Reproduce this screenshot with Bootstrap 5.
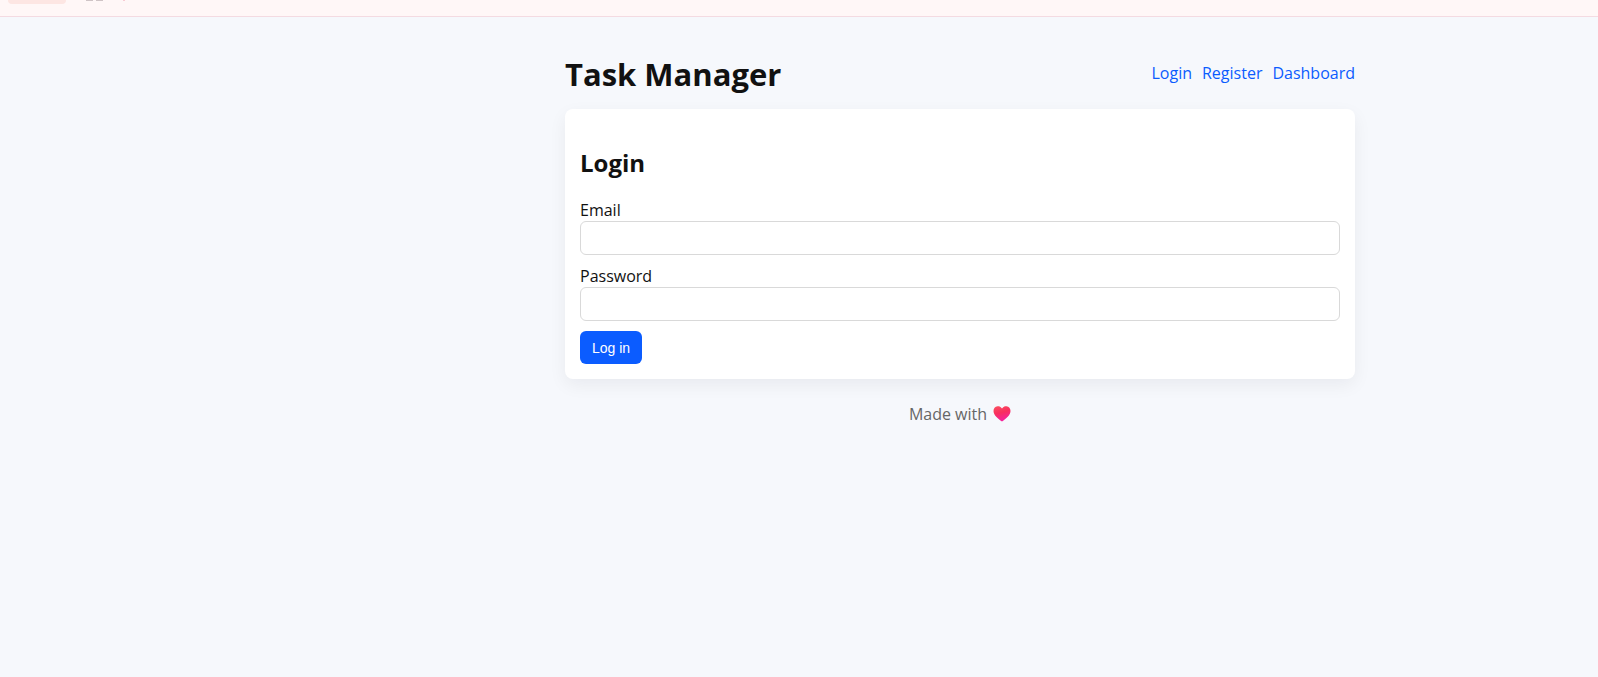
<!DOCTYPE html>
<html lang="en">
<head>
<meta charset="utf-8">
<meta name="viewport" content="width=device-width, initial-scale=1">
<title>Task Manager</title>
<link rel="stylesheet" href="https://cdn.jsdelivr.net/npm/bootstrap@5.3.0/dist/css/bootstrap.min.css">
<style>
body{background:#f6f8fc;color:#111;font-family:"Open Sans","Noto Sans",sans-serif;font-size:16px;line-height:22px}
.top-strip{height:17px;background:#fff7f7;border-bottom:1px solid #f4dbe2;padding-left:8px}
.strip-tab{width:58px;height:4px;background:#fde6e3;border-radius:0 0 6px 6px}
.strip-marks{margin-left:20px}
.shell{max-width:790px;margin-left:auto;margin-right:243px}
.site-head{height:92px;padding-top:22px}
h1{font-size:31px;line-height:46px;font-weight:700}
h2{font-size:24px;line-height:32px;font-weight:700;padding-top:23px;margin-bottom:20px}
.site-nav{gap:10px;padding-top:23px}
a{color:#0b5cff;text-decoration:none}
.panel{border:0;border-radius:8px;padding:15px;box-shadow:0 6px 18px rgba(20,20,40,.06)}
.form-label{margin:0;display:block}
.form-control{height:34px;border:1px solid #d9d9d9;border-radius:6px;padding:6px 8px}
.field-row{margin-bottom:10px}
.btn-login{background:#0b5cff;color:#fff;border:0;border-radius:6px;height:33px;padding:0 12px;font:14px/20px "Liberation Sans",Arial,sans-serif}
.btn-login:hover{background:#084fe0;color:#fff}
.site-foot{color:#666;padding-top:24px;gap:6px}
@media(max-width:1100px){.shell{margin-right:auto;padding:0 12px}}
</style>
<script src="https://cdn.jsdelivr.net/npm/bootstrap@5.3.0/dist/js/bootstrap.bundle.min.js"></script>
</head>
<body>
<div class="top-strip d-flex align-items-start overflow-hidden">
  <div class="strip-tab"></div>
  <svg class="strip-marks" width="40" height="1" aria-hidden="true"><path d="M0 0h7v1H0zM10 0h7v1h-7z" fill="#cfc4c6"/><path d="M37 0h2v1h-2z" fill="#f8ccd4"/></svg>
</div>
<div class="shell">
  <header class="site-head d-flex justify-content-between align-items-start">
    <h1 class="mt-2 mb-0 pt-1">Task Manager</h1>
    <nav class="site-nav d-flex">
      <a href="#login">Login</a>
      <a href="#register">Register</a>
      <a href="#dashboard">Dashboard</a>
    </nav>
  </header>
  <main class="card panel" id="login">
    <h2>Login</h2>
    <form>
      <div class="field-row">
        <label class="form-label" for="email">Email</label>
        <input class="form-control" type="email" id="email">
      </div>
      <div class="field-row">
        <label class="form-label" for="password">Password</label>
        <input class="form-control" type="password" id="password">
      </div>
      <button class="btn btn-login" type="submit">Log in</button>
    </form>
  </main>
  <footer class="site-foot d-flex justify-content-center align-items-center">
    <span>Made with</span>
    <svg width="18" height="16" viewBox="0 0 18 16" role="img" aria-label="love">
      <defs><linearGradient id="heart" x1="0" y1="0" x2="0.3" y2="1"><stop offset="0" stop-color="#fb5260"/><stop offset=".5" stop-color="#f82f5e"/><stop offset="1" stop-color="#f5229c"/></linearGradient></defs>
      <path d="M9 2.400C7.600.4 5.700 0 4.500.2 2 .5.5 2.500.5 5c0 4.500 4.500 7.500 8.500 10.600C13 12.500 17.500 9.500 17.500 5c0-2.500-1.500-4.500-4-4.800C12.300 0 10.400.4 9 2.400z" fill="url(#heart)"/>
    </svg>
  </footer>
</div>
</body>
</html>
